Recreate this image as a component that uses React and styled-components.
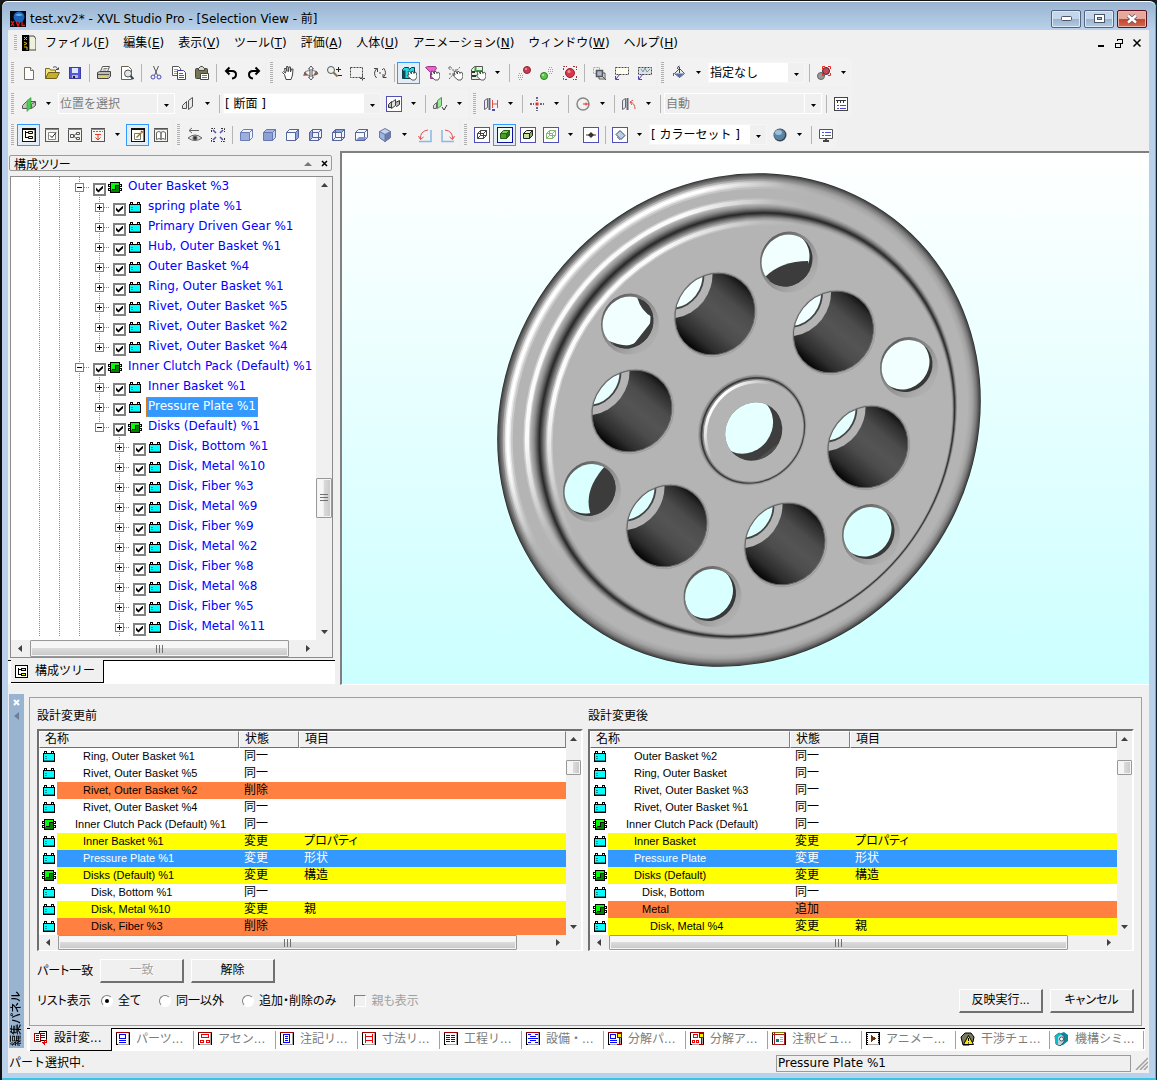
import React, { useState } from 'react';
import styled, { createGlobalStyle, css } from 'styled-components';

const GlobalStyle = createGlobalStyle`
* {
  box-sizing: border-box;
}

body {
  margin: 0;
  background: #1b1b1f;
  font: 12px/18px "DejaVu Sans", "Noto Sans CJK JP", sans-serif;
  color: #000;
}

button, input, select {
  font: inherit;
  color: inherit;
  margin: 0;
}

svg {
  display: block;
  flex: none;
}
`;

/* ---------- window frame ---------- */

const Frame = styled.div`
  display: flex;
  flex-direction: column;
  min-height: 100vh;
  padding: 0 7px 7px 6px;
  border: 1px solid #111;
  border-right-color: #0b2530;
  border-left-width: 2px;
  border-radius: 7px 7px 0 0;
  background: #b9d1ea;
  box-shadow: inset 0 1px #fff, inset -1px 0 #35c5e8, inset 0 -2px #35c5e8;
`;

const TitleBar = styled.header`
  display: flex;
  align-items: center;
  gap: 4px;
  height: 28px;
  margin: 1px -6px 0;
  padding: 5px 8px 0 8px;
  border-radius: 6px 6px 0 0;
  background: linear-gradient(#99b4d1, #b9d1ea);
`;

const Title = styled.h1`
  flex: 1;
  margin: 0;
  font-size: 12px;
  font-weight: normal;
`;

const Caption = styled.button`
  display: flex;
  align-items: center;
  justify-content: center;
  width: 30px;
  height: 18px;
  margin-left: -1px;
  padding: 0;
  border: 1px solid ${p => (p.$close ? '#5a0f1c' : '#52647f')};
  border-radius: 2px;
  background: ${p => (p.$close
    ? 'linear-gradient(#e6a79c 0 8px, #c4432b 8px, #cf6a50)'
    : 'linear-gradient(#c3d6ea 0 8px, #98b2cf 8px, #b6cbe2)')};
  box-shadow: inset 0 0 0 1px ${p => (p.$close ? '#eab5aa' : '#dce8f4')};
`;

const Client = styled.div`
  flex: 1;
  display: flex;
  flex-direction: column;
  background: #f0f0f0;
`;

/* ---------- menu and toolbars ---------- */

const MenuBar = styled.nav`
  display: flex;
  align-items: center;
  height: 27px;
  padding: 0 0 2px 3px;
`;

const MenuItem = styled.a`
  padding: 0 7px;
  color: #000;
  text-decoration: none;
`;

const DocIcon = styled.span`
  margin: 0 2px 0 2px;
`;

const MdiButtons = styled.div`
  display: flex;
  gap: 4px;
  margin-left: auto;
  margin-right: 5px;
`;

const FlatButton = styled.button`
  display: flex;
  align-items: center;
  justify-content: center;
  width: 14px;
  height: 14px;
  padding: 0;
  border: 0;
  background: none;
`;

const ToolRow = styled.div`
  display: flex;
  align-items: center;
  gap: 2px;
  height: 31px;
`;

const Bar = styled.div`
  display: flex;
  align-items: center;
  height: 29px;
  border-radius: 3px;
  background: #f2f2f2;
`;

const Grip = styled.span`
  width: 3px;
  height: ${p => p.$height || 21}px;
  margin: 0 3px;
  background: repeating-linear-gradient(#b0b0b0 0 1px, #f4f4f4 1px 2px);
`;

const Sep = styled.span`
  width: 1px;
  height: 18px;
  margin: 0 2px 0 3px;
  background: #b5b5b5;
`;

const Tool = styled.button`
  display: flex;
  align-items: center;
  justify-content: center;
  width: 23px;
  height: 22px;
  padding: 0;
  border: 1px solid transparent;
  background: none;
  ${p => p.$on && css`
    border-color: #3399ff;
    background: #e3edf7;
  `}
`;

const Drop = styled(Tool)`
  width: 17px;
`;

const ComboBox = styled.span`
  position: relative;
  width: ${p => p.$width}px;
  height: 21px;
  padding: 0 1px;
`;

const ComboSelect = styled.select`
  appearance: none;
  width: 100%;
  height: 21px;
  padding: 0 20px 0 1px;
  border: 1px solid ${p => (p.disabled ? '#fff' : '#f6f6f6')};
  border-radius: 0;
  outline: 0;
  background: ${p => (p.disabled ? '#f0f0f0' : '#fff')};
  color: ${p => (p.disabled ? '#7c7c7c' : '#000')};
  opacity: 1;
`;

const ComboArrow = styled.span`
  position: absolute;
  top: 1px;
  right: 2px;
  display: flex;
  align-items: center;
  justify-content: center;
  width: 17px;
  height: 19px;
  padding-top: 4px;
  border-left: 1px solid #fff;
  background: #f0f0f0;
  pointer-events: none;
`;

/* ---------- workspace ---------- */

const Workspace = styled.main`
  flex: 1;
  display: grid;
  grid-template-columns: 327px 1fr;
  gap: 5px;
  padding-top: 1px;
`;

const SidePane = styled.section`
  display: flex;
  flex-direction: column;
  padding: 4px 0 1px;
`;

const PaneHeader = styled.div`
  display: flex;
  align-items: flex-start;
  gap: 2px;
  height: 16px;
  margin: 0 3px 5px 1px;
  padding: 0 0 0 4px;
  border: 1px solid #9a9a9a;
  border-radius: 2px;
`;

const PaneTitle = styled.h2`
  flex: 1;
  margin: 0;
  font-size: 12px;
  font-weight: normal;
  font-feature-settings: "palt";
  line-height: 18px;
`;

const TreeFrame = styled.div`
  flex: 1;
  display: grid;
  grid-template-columns: 1fr 16px;
  grid-template-rows: 1fr 17px;
  margin: 0 2px 0 2px;
  border: 1px solid #8c8c8c;
  background: #f0f0f0;
`;

const TreeList = styled.ul`
  margin: 0;
  padding: 0 0 3px 19px;
  background: #fff;
  list-style: none;
  overflow: hidden;
`;

const TreeItem = styled.li`
  display: flex;
  align-items: center;
  height: 20px;
  white-space: nowrap;
`;

const Guide = styled.span`
  width: 20px;
  height: 20px;
  background: ${p => (p.$blank ? 'none' : 'repeating-linear-gradient(#8a8a8a 0 1px, #fff 1px 2px) 9px 0 / 1px 20px no-repeat')};
`;

const Knot = styled.span`
  display: flex;
  align-items: center;
  width: 20px;
  height: 20px;
  padding-left: 5px;
  background:
    repeating-linear-gradient(90deg, #8a8a8a 0 1px, #fff 1px 2px) 10px 10px / 10px 1px no-repeat,
    repeating-linear-gradient(#8a8a8a 0 1px, #fff 1px 2px) 9px 0 / 1px ${p => (p.$end ? 10 : 20)}px no-repeat;
`;

const KnotButton = styled(FlatButton)`
  width: 9px;
  height: 9px;
  background: #fff;
`;

const TreeCheck = styled.input`
  appearance: none;
  display: grid;
  width: 13px;
  height: 13px;
  margin: 4px ${p => (p.$tight ? 2 : 3)}px 0 3px;
  border: 2px solid #808080;
  background: #fff;

  &:checked::before {
    content: "";
    width: 7px;
    height: 7px;
    margin: 1px;
    background: #000;
    clip-path: polygon(0 30%, 35% 65%, 100% 0, 100% 38%, 35% 100%, 0 68%);
  }
`;

const TreeText = styled.label`
  height: 20px;
  margin-left: ${p => (p.$tight ? 4 : 5)}px;
  padding: 0 1px;
  border: 1px solid transparent;
  line-height: 17px;
  color: #0000ff;
  ${p => p.$selected && css`
    border: 1px dotted #e08020;
    background: #3399ff;
    color: #fff;
  `}
`;

const SideTabs = styled.div`
  display: flex;
  height: 24px;
  margin-top: 2px;
  border-top: 1px solid #000;
  background: #fff;
`;

const SideTab = styled.button`
  display: flex;
  align-items: center;
  gap: 7px;
  height: 23px;
  margin: -1px 0 0 3px;
  padding: 0 8px 0 4px;
  border: solid #000;
  border-width: 0 1px 1px 0;
  background: #f0f0f0;
`;

const View = styled.section`
  display: flex;
  border: 1px solid #fff;
  border-top: 2px solid #808080;
  border-left: 2px solid #808080;
  border-right: 0;
  background: linear-gradient(#fff, #ccffff);
`;

/* ---------- scroll bars ---------- */

const ScrollTrack = styled.div`
  display: grid;
  background: #f0f0f0;
  ${p => (p.$vertical
    ? css`grid-template-rows: 17px ${p.$before}fr ${p.$size}fr ${p.$after}fr 17px;`
    : css`grid-template-columns: 18px ${p.$before}fr ${p.$size}fr ${p.$after}fr 18px;`)}
`;

const Thumb = styled.span`
  display: flex;
  align-items: center;
  justify-content: center;
  min-width: 0;
  min-height: 0;
  border: 1px solid #989898;
  border-radius: 1px;
  background: linear-gradient(${p => (p.$vertical ? '90deg' : '180deg')}, #f6f6f6 0 45%, #dadada 50%, #c8c8c8);
  box-shadow: inset 0 0 0 1px #f4f4f4;
`;

const ScrollCell = styled.span`
  display: flex;
  align-items: center;
  justify-content: center;
`;

/* ---------- compare panel ---------- */

const Dock = styled.section`
  display: flex;
  margin-top: 9px;
  padding-left: 1px;
`;

const DockHandle = styled.div`
  display: flex;
  flex-direction: column;
  align-items: center;
  width: 15px;
  margin-bottom: 3px;
  padding: 1px 0 2px;
  background: #99b4d1;
`;

const DockTitle = styled.span`
  margin-top: auto;
  font-size: 11px;
  font-weight: 500;
  line-height: 15px;
  writing-mode: vertical-rl;
  text-orientation: sideways;
  transform: rotate(180deg);
`;

const DockBody = styled.div`
  flex: 1;
  min-width: 0;
  padding: 3px 4px 0 3px;
`;

const Group = styled.div`
  margin: 0 3px 2px 2px;
  padding: 9px 7px 12px 7px;
  border: 1px solid #a0a0a0;
  font-family: "Liberation Sans", "Noto Sans CJK JP", sans-serif;
  font-feature-settings: "palt";
  white-space: nowrap;
`;

const Lists = styled.div`
  display: grid;
  grid-template-columns: 1fr 1fr;
  gap: 5px;
`;

const ListTitle = styled.h3`
  margin: 0 0 4px;
  font-size: 12px;
  font-weight: normal;
  line-height: 18px;
`;

const ListFrame = styled.div`
  display: grid;
  grid-template-columns: 1fr 15px;
  grid-template-rows: 204px 15px;
  border: solid;
  border-width: 2px 2px 1px 2px;
  border-color: #707070 #fff #fff #707070;
  background: #f0f0f0;
`;

const ListPort = styled.div`
  overflow: hidden;
  background: #fff;
`;

const Table = styled.table`
  width: 100%;
  table-layout: fixed;
  border-collapse: separate;
  border-spacing: 0;
  line-height: 17px;
`;

const HeadCell = styled.th`
  height: 17px;
  padding: 0 0 0 5px;
  border: 1px solid;
  border-color: #fff #808080 #707070 #fff;
  background: #f0f0f0;
  font-weight: normal;
  line-height: 15px;
  text-align: left;
`;

const ROW_COLORS = {
  same: ['#fff', '#000'],
  gone: ['#ff8040', '#000'],
  added: ['#ff8040', '#000'],
  changed: ['#ffff00', '#000'],
  current: ['#3399ff', '#fff'],
};

const Cell = styled.td`
  height: 17px;
  padding: 0 0 0 5px;
  background: ${p => ROW_COLORS[p.$kind][0]};
  color: ${p => ROW_COLORS[p.$kind][1]};
`;

const IconCell = styled.td`
  height: 17px;
  padding: 0 0 0 ${p => (p.$wide ? 3 : 4)}px;
`;

const NameCell = styled(Cell)`
  padding-left: ${p => 10 + p.$level * 8}px;
  font-size: 11px;
`;

const PushButton = styled.button`
  width: 84px;
  height: 24px;
  padding: 0 0 2px;
  border: solid;
  border-width: 1px 2px 2px 1px;
  border-color: #fff #707070 #707070 #fff;
  background: #f0f0f0;

  &:disabled {
    color: #a0a0a0;
    text-shadow: 1px 1px #fff;
  }
`;

const MatchRow = styled.div`
  display: flex;
  align-items: center;
  gap: 7px;
  margin-top: 8px;
`;

const RowLabel = styled.span`
  width: ${p => p.$width}px;
`;

const FilterRow = styled.fieldset`
  display: flex;
  align-items: center;
  margin: 6px 0 0;
  padding: 0;
  border: 0;
`;

const Choice = styled.label`
  display: flex;
  align-items: center;
  gap: 5px;
  margin-right: 18px;
  color: ${p => (p.$off ? '#a0a0a0' : '#000')};
`;

const Radio = styled.input`
  appearance: none;
  display: grid;
  place-items: center;
  width: 12px;
  height: 12px;
  border: 1px solid;
  border-color: #808080 #fff #fff #808080;
  border-radius: 6px;
  background: #fff;

  &:checked::before {
    content: "";
    width: 4px;
    height: 4px;
    border-radius: 2px;
    background: #000;
  }
`;

const CheckBox = styled.input`
  appearance: none;
  width: 12px;
  height: 12px;
  border: 1px solid;
  border-color: #808080 #fff #fff #808080;
  background: #f0f0f0;
`;

const Commands = styled.div`
  display: flex;
  gap: 7px;
  margin-left: auto;
`;

const DockTabs = styled.div`
  display: flex;
  height: 23px;
  padding-left: 3px;
  border-top: 1px solid #000;
  background: #fff;
`;

const DockTab = styled.button`
  display: flex;
  align-items: center;
  gap: 6px;
  flex: ${p => (p.$wide ? '0 1 94px' : '0 1 82px')};
  height: 18px;
  min-width: 0;
  margin-top: 2px;
  padding: 0 0 2px 4px;
  border: 0;
  border-right: 1px solid #a0a0a0;
  background: none;
  color: #7c7c7c;
  white-space: nowrap;
  ${p => p.$on && css`
    height: 23px;
    margin-top: -1px;
    padding-bottom: 3px;
    border: solid #000;
    border-width: 0 1px 1px 0;
    background: #f0f0f0;
    color: #000;
  `}
`;

const StatusBar = styled.footer`
  display: flex;
  align-items: center;
  gap: 3px;
  height: 22px;
  padding: 2px 1px 0 1px;
`;

const StatusText = styled.span`
  flex: 1;
`;

const StatusField = styled.output`
  width: 355px;
  height: 17px;
  padding: 0 1px;
  border: 1px solid #9a9a9a;
  line-height: 14px;
`;

/* ---------- icons ---------- */

const Svg = ({ w = 16, h = 16, children, ...rest }) => (
  <svg width={w} height={h} viewBox={`0 0 ${w} ${h}`} fill="none" aria-hidden="true" {...rest}>{children}</svg>
);

const Caret = () => <Svg w={5} h={3}><path d="M0 0h5L2.500 3z" fill="#000" /></Svg>;

const Cube = ({ front, top, side, line = '#55659a', inner }) => (
  <g stroke={line}>
    <path d="M1.500 5.500h9v8h-9z" fill={front} />
    <path d="M1.500 5.500l3-3h9l-3 3z" fill={top} />
    <path d="M10.500 5.500l3-3v8l-3 3z" fill={side} />
    {inner && <path d="M4.500 2.500v8h9M4.500 10.500l-3 3" />}
  </g>
);

const SmallCube = ({ fill, top, side, line, wire }) => (
  <g stroke={line}>
    <path d="M3.500 6.500h6v5h-6z" fill={fill} />
    <path d="M3.500 6.500l3-3h6l-3 3z" fill={top} />
    <path d="M9.500 6.500l3-3v5l-3 3z" fill={side} />
    {wire && <path d="M6.500 3.500v5h6M6.500 8.500l-3 3" />}
  </g>
);

const BoxFrame = ({ color = '#5050b8', fill = '#fff', children }) => (
  <g>
    <rect x="0.500" y="0.500" width="15" height="15" stroke={color} fill={fill} />
    {children}
  </g>
);

const Plate = ({ children, dark }) => (
  <g>
    <rect x="1.500" y="1.500" width="13" height="13" fill={dark ? '#fffdf0' : '#f4f4f0'} stroke={dark ? '#111' : '#555'} />
    <path d="M1 2.500h14" stroke={dark ? '#111' : '#888'} />
    {dark && <path d="M14 2v13" stroke="#111" />}
    {children}
  </g>
);

const Pointer = () => (
  <path d="M7 6.500l1.500-.5 2 3V6.500h1.500l1 2 1-1.500 1.500 1 .5 4-2 3h-3L7 11.500l-.5-1.500 1.500 0z" fill="#fff" stroke="#333" strokeWidth=".8" />
);

const Slab = ({ x = 0, fill = '#e4ecf0' }) => (
  <path d={`M${x + 2.5} 4.500l3-2v9l-3 2z`} fill={fill} stroke="#667" />
);

const ICONS = {
  newFile: <g><path d="M3.500 2.500h6l3 3v9h-9z" fill="#fff" stroke="#77705c" /><path d="M9.500 2.500v3h3" stroke="#77705c" fill="#eee" /></g>,
  open: <g><path d="M1.500 13.500v-10h4l1 1.500h5v3" fill="#f4e27a" stroke="#7a6a20" /><path d="M1.500 13.500l3-6h11l-3 6z" fill="#c8ac2c" stroke="#6f6018" /><path d="M9 2.500c2-1.500 4-.5 4.500 1.500M14.500 2.500v2h-2.500" stroke="#444" /></g>,
  save: <g><rect x="2.500" y="2.500" width="11" height="11" fill="#5656d8" stroke="#3c3ca4" /><rect x="5" y="3" width="6" height="5" fill="#dfe6ff" /><rect x="5" y="10" width="6" height="3" fill="#b8b8c8" /><rect x="6" y="11" width="2" height="2" fill="#222" /></g>,
  print: <g><path d="M4.500 6.500l2-5h7l-2 5" fill="#fff" stroke="#555" /><path d="M7.500 3.500h4M6.500 5h4" stroke="#888" /><path d="M1.500 7.500l2-1h11v5l-2 2h-11z" fill="#bcbcb4" stroke="#444" /><path d="M2 9.500h11" stroke="#555" /><path d="M3 12h8" stroke="#f2d848" strokeWidth="1.500" /></g>,
  preview: <g><path d="M2.500 1.500h7l3 3v10h-10z" fill="#fff" stroke="#66604c" /><circle cx="9" cy="8.500" r="3.500" fill="#dbe8ec" stroke="#555" /><path d="M11.500 11l3 3" stroke="#444" strokeWidth="2" /></g>,
  cut: <g stroke="#555"><path d="M5.500 1l4 9.500M10.500 1l-4 9.500" /><circle cx="5" cy="12" r="2" stroke="#4848c8" /><circle cx="11" cy="12" r="2" stroke="#4848c8" /></g>,
  copy: <g><path d="M1.500 1.500h6l2 2v7h-8z" fill="#fff" stroke="#555" /><path d="M3 4.500h4M3 6.500h4M3 8.500h3" stroke="#999" /><path d="M6.500 5.500h6l2 2v7h-8z" fill="#fff" stroke="#40409c" /><path d="M8 8.500h4M8 10.500h5M8 12.500h5" stroke="#5555c4" /></g>,
  paste: <g><rect x="1.500" y="3.500" width="12" height="10" rx="1" fill="#77764e" stroke="#444" /><path d="M4.500 5.500v-2l2-2h2l2 2v2z" fill="#d8d8d0" stroke="#444" /><path d="M6.500 8.500h8v6h-8z" fill="#fff" stroke="#444" /><path d="M8 10.500h5M8 12.500h5" stroke="#777" /></g>,
  undo: <path d="M3 6h6q4 0 4 3.500t-4 4M6.500 2.500L3 6l3.500 3.500" stroke="#000" strokeWidth="2" />,
  redo: <path d="M13 6H7q-4 0-4 3.500t4 4M9.500 2.500L13 6 9.500 9.500" stroke="#000" strokeWidth="2" />,
  hand: <path d="M4.500 9.500l-2-2 1-1 2 1.500-1-4.500h1.500l1 3-.5-5h1.500l.5 5 .5-4.500h1.500V7l1-3h1.500l-.5 6-1.500 4.500h-5z" fill="#fff" stroke="#444" />,
  orbit: <g stroke="#555"><ellipse cx="8" cy="8" rx="6.500" ry="2.500" stroke="#777" /><path d="M8 1l2.500 3H9v8h1.500L8 15l-2.500-3H7V4H5.500z" fill="#fff" /><path d="M2 7l-1.500 3.500 4-.5zM13 6l2 3-4 1z" fill="#a05048" strokeWidth=".5" /></g>,
  zoom: <g stroke="#555"><circle cx="5" cy="5" r="3.500" fill="#e8f0f0" /><path d="M7.500 7.500l4 4" stroke="#85744a" strokeWidth="2" /><path d="M10 4.500h5M12.500 2v5M12 10.500h4" stroke="#222" /></g>,
  marquee: <path d="M1.500 2.500h12v10h-12zM13.500 10.500v5M11 13.500h5" stroke="#444" strokeDasharray="2 1" />,
  spin: <g stroke="#444"><path d="M4.500 13q-4-5 0-9M2 3.500h3.500V7M11.500 3q4 5 0 9M14.500 12.500H11V9" /><path d="M7 8h2M10 5l1-1" /></g>,
  pickPart: <g><path d="M1.500 4.500l2-2h4l1 2 2-2h3v8l-4 3h-8z" fill="#20d8e0" stroke="#083c40" /><path d="M1.500 5.500v8h3v-8z" fill="#184858" /><Pointer /></g>,
  pickFace: <g><path d="M1.500 2.500l2-1h8l1 2-3 4v6h-3v-6z" fill="#ec60d0" stroke="#993a88" /><Pointer /></g>,
  pickEdge: <g stroke="#666"><path d="M2 14L13 2M1 3h4M3 1v4M2 9h5M5 5h5" strokeDasharray="2 1" /><Pointer /></g>,
  pickAny: <g><path d="M1.500 4.500l3-3h8v10l-3 3h-8z" fill="#e8f0e4" stroke="#555" /><path d="M5.500 2v4h7" stroke="#39a339" strokeWidth="2" /><path d="M2 7h3M2 11h4" stroke="#333" strokeWidth="2" /><Pointer /></g>,
  moveRed: <g><circle cx="11" cy="5" r="3.500" fill="#c83c50" stroke="#8c2434" /><circle cx="10" cy="4" r="1" fill="#f0a0a8" /><g stroke="#c09c60" strokeDasharray="1 1"><path d="M3 8.500h4M2 10.500h6M2 12.500h6M3 14.500h4" /></g></g>,
  moveGreen: <g><circle cx="5" cy="11" r="3.500" fill="#5cc848" stroke="#307828" /><circle cx="4" cy="10" r="1" fill="#c0f0b0" /><g stroke="#c09c60" strokeDasharray="1 1"><path d="M10 2.500h4M9 4.500h6M9 6.500h6M10 8.500h4" /></g></g>,
  focusRed: <g><circle cx="8" cy="8" r="4.500" fill="#d8384c" stroke="#98202e" /><circle cx="7" cy="6.500" r="1.500" fill="#f09098" /><path d="M1.500 5v-3.500H5M11 1.500h3.500V5M14.500 11v3.500H11M5 14.500H1.500V11" stroke="#a03038" strokeDasharray="2 1" /></g>,
  layers: <g stroke="#555"><path d="M2.500 2.500h6v6h-6z" stroke="#8ab894" strokeDasharray="2 1" /><path d="M5.500 5.500h6v6h-6z" fill="#a8b8d0" strokeWidth="1.500" /><path d="M12 8h2v6H8v-2M15 15l-3-3" /></g>,
  lassoA: <g><path d="M1.500 2.500h13v7h-13z" stroke="#444" fill="#fffdf0" strokeDasharray="2 1" /><path d="M6 9l-4 5M1.500 11v3.500H5" stroke="#5040b0" /></g>,
  lassoB: <g><path d="M1.500 2.500h13v7h-13z" stroke="#444" fill="#dfe3e8" strokeDasharray="2 1" /><path d="M4 4l2 3 2-4 2 4 3-3" stroke="#799" /><path d="M6 9l-4 5M1.500 11v3.500H5" stroke="#5040b0" /></g>,
  bucket: <g><path d="M3.500 8.500l5-5 5 5-5 4z" fill="#e8eef4" stroke="#555" /><path d="M4 8.500h9l-4.500 4z" fill="#5c6fa8" /><path d="M8.500 2v6M6.500 4q0-3 2-3" stroke="#444" /><path d="M2.500 8v3" stroke="#5060a8" /></g>,
  linkRed: <g><circle cx="5" cy="11" r="3.500" fill="#999" stroke="#666" /><circle cx="10" cy="6" r="3.500" fill="#c84858" stroke="#333" /><path d="M6.500 4V1.500H9M12 1.500h2.500V4M14.500 8v2.500H12M6.500 8v2.500H9" stroke="#f02828" /></g>,

  sectionCut: <g><path d="M1.500 9.500l4-4h9v4l-4 3h-9z" fill="#c4c4bc" stroke="#555" /><path d="M10.500 12v-4l4-2" stroke="#666" /><path d="M6 4.500l4-3v10l-4 4z" fill="#4ccc50" stroke="#289a30" strokeWidth=".6" /></g>,
  sectionA: <g stroke="#555"><path d="M2.500 12.500v-3l4-4v7z" fill="#e8e8e4" /><path d="M8.500 13.500v-9l4-3v9z" fill="#ece9e4" /></g>,
  sectionBox: <BoxFrame><path d="M2.500 11.500v-3l3-3v6zM9.500 9.500v-3l4-2v4l-3 2z" fill="#bbb" stroke="#333" /><path d="M5.500 12.500v-6l4-3v6z" fill="#e4e4e4" stroke="#444" /></BoxFrame>,
  sectionOk: <g><path d="M1.500 12.500v-3l3-3v6z" fill="#ddd" stroke="#666" /><path d="M5.500 12.500v-8l4-3v8z" fill="#a0e8a0" stroke="#38a040" /><path d="M10 11l2 3 3-5" stroke="#333" /></g>,
  distance: <g><Slab x={-1} /><path d="M6.500 2v12" stroke="#667" strokeWidth="2" /><path d="M9.500 4v8M14.500 4v8M9.500 8h5" stroke="#e05048" /><path d="M9 13h3v2H9z" fill="#5050a0" /></g>,
  point: <g><path d="M8 1v4M8 11v4M1 8h4M11 8h4" stroke="#668" strokeWidth="2" strokeDasharray="2 1" /><path d="M6.500 6.500h3v3h-3z" fill="#e03020" /></g>,
  radius: <g><circle cx="8" cy="8" r="6" stroke="#888" strokeWidth="1.500" /><path d="M8 8h6M11 6.500v3" stroke="#f02820" /></g>,
  angle: <g><Slab x={-1} /><path d="M6.500 2v12" stroke="#667" strokeWidth="2" /><path d="M9 6q5 1 5 7M9 6l3-2M9 6l2 3" stroke="#e05048" /></g>,
  ruler: <g><rect x="1.500" y="1.500" width="13" height="13" fill="#fff" stroke="#444" /><path d="M3 4.500h10M4.500 4v3M7.500 4v3M10.500 4v3" stroke="#333" /><path d="M4 9.500h2M7 9.500h6M4 12.500h2M7 12.500h6" stroke="#4a4ac8" /></g>,

  treePanel: <Plate dark><path d="M4.500 4v7M4 5.500h3M4 10.500h3" stroke="#000" /><path d="M7.500 4.500h4v2h-4zM7.500 9.500h4v2h-4z" fill="#fff29a" stroke="#000" /></Plate>,
  checkPanel: <Plate><path d="M4.500 5.500h7v7h-7z" stroke="#888" fill="#fff" /><path d="M6 8.500l2 2 4-5" stroke="#222" /></Plate>,
  linkPanel: <Plate><path d="M3.500 7.500h3v3h-3zM9.500 5.500h3v2h-3zM9.500 10.500h3v2h-3zM7 9l2-2.500M7 9l2 2.500" stroke="#555" /></Plate>,
  importPanel: <Plate><path d="M3 4.500h10" stroke="#777" strokeDasharray="2 1" /><path d="M8 7v6M5.500 10.500L8 13l2.500-2.500M5 7.500h6" stroke="#e03828" /></Plate>,
  editPanel: <Plate dark><path d="M4.500 6.500h6v6h-6z" fill="#fff" stroke="#777" /><path d="M6.500 10.500l5-5" stroke="#8a8418" strokeWidth="1.500" /><path d="M11 4l2 1.500" stroke="#c03030" strokeWidth="1.500" /></Plate>,
  bookPanel: <Plate><path d="M3.500 5.500l2.500-1 2 1v7l-2-1-2.500 1zM12.500 5.500l-2.500-1-2 1v7l2-1 2.500 1z" fill="#fff" stroke="#666" /></Plate>,
  lookBack: <g stroke="#666"><path d="M2 3.500h10M5 1L2 3.500 5 6" /><path d="M1 11q7-6 14 0-7 5-14 0z" fill="#ddd" /><circle cx="8" cy="11" r="2" fill="#333" /></g>,
  fit: <g stroke="#5050a8"><path d="M1.500 5V1.500H5M11 1.500h3.500V5M14.500 11v3.500H11M5 14.500H1.500V11" strokeDasharray="2 1" stroke="#333" /><path d="M3 3l3 3M13 3l-3 3M13 13l-3-3M3 13l3-3" strokeWidth="1.500" /></g>,
  viewFront: <Cube front="#9aaee0" top="#eef2fb" side="#eef2fb" line="#6c7cb4" />,
  viewBack: <Cube front="#8fa0d4" top="#a8b8e6" side="#c8d2f0" line="#6678b0" />,
  viewLeft: <Cube front="#f6f8ff" top="#f6f8ff" side="#8fa4dc" />,
  viewRight: <g><Cube front="#f0f3fc" top="#f0f3fc" side="#f0f3fc" inner /><path d="M2 6l2-2v6l-2 3z" fill="#8fa4dc" /></g>,
  viewTop: <Cube front="#f2f5fd" top="#8fa4dc" side="#f2f5fd" inner />,
  viewBottom: <g><Cube front="#f6f8ff" top="#f6f8ff" side="#f6f8ff" /><path d="M2 13l3-3h8l-3 3z" fill="#7f94d0" /></g>,
  viewIso: <g stroke="#667aa8"><path d="M8 1.500l5.500 3v6L8 14.500l-5.500-4v-6z" fill="#c8d4ee" /><path d="M8 7.500l5.500-3v6L8 14.500z" fill="#6c7ca8" /><path d="M2.500 4.500l5.500 3v7l-5.500-4z" fill="#a0b4e0" /></g>,
  rotateLeft: <g><path d="M2 14.500h12V3" stroke="#88b8e8" strokeWidth="1.500" /><path d="M3.500 12Q3 4 11 3M1.500 9l2 3.500 3-2.500" stroke="#e05050" /></g>,
  rotateRight: <g><path d="M14 14.500H2V3" stroke="#88b8e8" strokeWidth="1.500" /><path d="M12.500 12Q13 4 5 3M14.500 9l-2 3.500-3-2.500" stroke="#e05050" /></g>,
  drawWire: <BoxFrame><SmallCube fill="none" top="none" side="none" line="#444" wire /></BoxFrame>,
  drawSolid: <BoxFrame color="#1010a0" fill="#f2fff0"><SmallCube fill="#4c9c30" top="#80c860" side="#2f7018" line="#286018" /></BoxFrame>,
  drawEdges: <BoxFrame><SmallCube fill="#c0e0a8" top="#e0f4d0" side="#80a868" line="#222" /></BoxFrame>,
  drawGhost: <BoxFrame><SmallCube fill="#fff" top="#f4fff0" side="#fff" line="#88b878" wire /></BoxFrame>,
  midPoint: <BoxFrame><path d="M3 8h10" stroke="#333" /><path d="M8 5l3 3-3 3-3-3z" fill="#333" /></BoxFrame>,
  tilt: <BoxFrame><path d="M4 7.500l4-4 5 5-4 4z" fill="#b8d0e8" stroke="#445" /><path d="M5 10l3 3" stroke="#889" /></BoxFrame>,
  ball: <g><circle cx="8" cy="8" r="6.500" fill="#3c4450" /><circle cx="7.500" cy="7.500" r="5.500" fill="#5c84a4" /><ellipse cx="6.500" cy="5.500" rx="3.500" ry="2.500" fill="#9cc0d8" /></g>,
  monitor: <g><path d="M1.500 2.500h13v9h-13z" fill="#fff" stroke="#555" /><path d="M4 5.500h2M7 5.500h6M4 8.500h2M7 8.500h6" stroke="#4858c8" /><path d="M5 14h6M8 12v2" stroke="#444" strokeWidth="2" /></g>,
};

const Icon = ({ name }) => <Svg>{ICONS[name]}</Svg>;

const PartIcon = () => (
  <Svg w={12} h={11} shapeRendering="crispEdges">
    <path d="M1 0h3v2h4V0h3v2h1v9H0V2h1z" fill="#000" />
    <path d="M2 1h1v1H2zM9 1h1v1H9z" fill="#fff" />
    <path d="M1 3h10v7H1z" fill="#00ffff" />
    <path d="M2 5h2v1H2zM2 7h2v1H2zM1 9h10v1H1z" fill="#008c8c" />
  </Svg>
);

const AssemblyIcon = () => (
  <Svg w={14} h={11} shapeRendering="crispEdges">
    <path d="M2 0h10v11H2zM0 2h2v3H0zM0 6h2v3H0zM12 2h2v3h-2zM12 6h2v3h-2z" fill="#000" />
    <path d="M1 3h1v1H1zM1 7h1v1H1zM12 3h1v1h-1zM12 7h1v1h-1z" fill="#fff" />
    <path d="M3 1h8v9H3z" fill="#00ff00" />
    <path d="M8 4h3v6H3V8h5z" fill="#008000" />
    <path d="M7 3h4v1H8v4H4V7h3z" fill="#000" />
  </Svg>
);

const TabBase = ({ children, top = '#a00000' }) => (
  <Svg w={14} h={14} shapeRendering="crispEdges">
    <path d="M0.500 0.500h13v12H.5z" fill="#fff" stroke="#000" />
    <path d="M12 1v11H2" stroke="#a8a8a8" />
    <path d="M0 0.500h14" stroke={top} />
    {children}
  </Svg>
);

const Pin = () => <g><path d="M11.500 4v9M9 12.500h5" stroke="#900" /><path d="M9 1h4v4H9z" fill="#ffee00" stroke="#900" /></g>;

const TAB_ICONS = {
  change: <Svg w={14} h={14} shapeRendering="crispEdges"><path d="M5.500.5h7v9h-7z" fill="#fff" stroke="#000" /><path d="M7 2.500h4M7 4.500h4M7 6.500h4" stroke="#00f" /><path d="M.5 2.500h6v8h-6z" fill="#fff" stroke="#a00000" /><path d="M2 4.500h3M2 6.500h3M2 8.500h3" stroke="#00f" /><path d="M12.500 8v3.500H8M10.500 9v5M9 10.500v2" stroke="#e00000" /></Svg>,
  parts: <TabBase><path d="M3.500 2.500h6v4h-6zM3 8.500h7M3 10.500h7" stroke="#00f" /></TabBase>,
  assembly: <TabBase><path d="M3.500 2.500h7v3h-7zM2.500 8.500h3v2h-3zM8.500 8.500h3v2h-3z" stroke="#e00" /></TabBase>,
  note: <TabBase><path d="M3.500 2.500h6v8h-6z M5 4.500h3M5 6.500h3M5 8.500h3" stroke="#00f" /></TabBase>,
  dimension: <TabBase><path d="M3.500 2v9M10.500 2v9M3 4.500h8M3 8.500h8" stroke="#e00" /></TabBase>,
  process: <TabBase><path d="M2 3.500h4M2 5.500h4M2 7.500h4M2 9.500h4M7 3.500h4M7 5.500h4M7 7.500h4M7 9.500h4" stroke="#00f" /></TabBase>,
  facility: <TabBase><path d="M2 2.500h3M9 2.500h3M4 4.500h6M2 6.500h10M4 8.500h6M2 10.500h3M9 10.500h3" stroke="#00f" /></TabBase>,
  explodeParts: <TabBase><path d="M2.500 2.500h5v4h-5zM2 8.500h7M2 10.500h7" stroke="#00f" /><Pin /></TabBase>,
  explodeAsm: <TabBase><path d="M3.500 2.500h4v3h-4zM2.500 8.500h2v2h-2zM6.500 8.500h2v2h-2z" stroke="#e00" /><Pin /></TabBase>,
  noteView: <TabBase top="#808000"><path d="M2 0v13M12 0v13M0 2h13M0 12h13" stroke="#a02020" /><path d="M4 7h3v3H4z" fill="#008080" /><path d="M8 5h3M8 7h3M8 9h3" stroke="#aaa" /></TabBase>,
  animation: <TabBase top="#000"><path d="M1.500 2v10M12.500 2v10" stroke="#000" strokeDasharray="1 1" /><path d="M5 3l5 3.500L5 10z" fill="#703000" /></TabBase>,
  clash: <Svg w={15} h={14}><path d="M1 5l4-4h6l3 4-1 5-4 3H3z" fill="#787a60" stroke="#000" /><path d="M8.500 3.500l5 9h-10z" fill="#ffee00" stroke="#000" /><path d="M8.500 6v3M8.500 10.500v1" stroke="#000" /></Svg>,
  mechanism: <Svg w={15} h={14}><path d="M5 2l5-2 4 3v6l-5 4-4 1z" fill="#088a9a" /><path d="M1 4l4-3 5 3v6l-4 4-4-2z" fill="#c0d4d8" stroke="#456" /><path d="M1 4l4-3 3 1-4 3v8l-3-2z" fill="#00c0d0" /><circle cx="7.500" cy="7" r="2" fill="#fff" stroke="#456" /></Svg>,
};

const SideTabIcon = () => (
  <Svg w={13} h={13} shapeRendering="crispEdges">
    <path d="M.5.5h12v12H.5z" fill="#fff" stroke="#000" />
    <path d="M3.500 3v7M4 4.500h2M4 9.500h2" stroke="#000" />
    <path d="M6.500 3.500h4v2h-4zM6.500 8.500h4v2h-4z" fill="#ff0" stroke="#000" />
  </Svg>
);

/* ---------- toolbar contents: '-' separator, 'v' drop arrow, '*' pressed ---------- */

const TOOL_ROWS = [
  [
    ['newFile', 'open', 'save', '-', 'print', 'preview', '-', 'cut', 'copy', 'paste', '-', 'undo', 'redo'],
    ['hand', 'orbit', 'zoom', 'marquee', 'spin', '-', '*pickPart', 'pickFace', 'pickEdge', 'pickAny', 'v', '-', 'moveRed', 'moveGreen', 'focusRed', '-', 'layers', 'lassoA', 'lassoB'],
    ['bucket', 'v', { label: '指定なし', width: 99 }, '-', 'linkRed', 'v'],
  ],
  [
    ['sectionCut', 'v', { label: '位置を選択', width: 119, disabled: true }, 'sectionA', 'v', '-', { label: '[ 断面 ]', width: 160 }, 'sectionBox', 'v', '-', 'sectionOk', 'v'],
    ['distance', 'v', '-', 'point', 'v', '-', 'radius', 'v', '-', 'angle', 'v', '-', { label: '自動', width: 160, disabled: true }, '-', 'ruler'],
  ],
  [
    ['*treePanel', 'checkPanel', 'linkPanel', 'importPanel', 'v', '*editPanel', 'bookPanel'],
    ['lookBack', 'fit', '-', 'viewFront', 'viewBack', 'viewLeft', 'viewRight', 'viewTop', 'viewBottom', 'viewIso', 'v', 'rotateLeft', 'rotateRight'],
    ['drawWire', '*drawSolid', 'drawEdges', 'drawGhost', 'v', 'midPoint', '-', 'tilt', 'v', { label: '[ カラーセット ]', width: 120 }, 'ball', 'v', '-', 'monitor'],
  ],
];

const MENU = [['ファイル', 'F'], ['編集', 'E'], ['表示', 'V'], ['ツール', 'T'], ['評価', 'A'], ['人体', 'U'], ['アニメーション', 'N'], ['ウィンドウ', 'W'], ['ヘルプ', 'H']];

function ToolItem({ item }) {
  if (item === '-') return <Sep />;
  if (item === 'v') return <Drop aria-label="その他"><Caret /></Drop>;
  if (item.label) {
    return (
      <ComboBox $width={item.width}>
        <ComboSelect aria-label={item.label} disabled={item.disabled}><option>{item.label}</option></ComboSelect>
        <ComboArrow><Caret /></ComboArrow>
      </ComboBox>
    );
  }
  const on = item[0] === '*';
  const name = on ? item.slice(1) : item;
  return <Tool $on={on} aria-label={name}><Icon name={name} /></Tool>;
}

/* ---------- tree ---------- */

const TREE = [
  [0, 'Outer Basket %3', 'asm'],
  [1, 'spring plate %1'],
  [1, 'Primary Driven Gear %1'],
  [1, 'Hub, Outer Basket %1'],
  [1, 'Outer Basket %4'],
  [1, 'Ring, Outer Basket %1'],
  [1, 'Rivet, Outer Basket %5'],
  [1, 'Rivet, Outer Basket %2'],
  [1, 'Rivet, Outer Basket %4', 'part', true],
  [0, 'Inner Clutch Pack (Default) %1', 'asm'],
  [1, 'Inner Basket %1'],
  [1, 'Pressure Plate %1'],
  [1, 'Disks (Default) %1', 'asm', true],
  [2, 'Disk, Bottom %1'],
  [2, 'Disk, Metal %10'],
  [2, 'Disk, Fiber %3'],
  [2, 'Disk, Metal %9'],
  [2, 'Disk, Fiber %9'],
  [2, 'Disk, Metal %2'],
  [2, 'Disk, Fiber %8'],
  [2, 'Disk, Metal %8'],
  [2, 'Disk, Fiber %5'],
  [2, 'Disk, Metal %11'],
];

function TreeRow({ id, level, name, type, end, selected }) {
  const asm = type === 'asm';
  return (
    <TreeItem>
      <Guide />
      <Guide />
      {level > 0 && <Guide />}
      {level > 1 && <Guide $blank />}
      <Knot $end={end}>
        <KnotButton aria-label={asm ? '閉じる' : '開く'}>
          <Svg w={9} h={9} shapeRendering="crispEdges">
            <path d="M.5.5h8v8h-8z" fill="#fff" stroke="#808080" />
            <path d={asm ? 'M2 4.500h5' : 'M2 4.500h5M4.500 2v5'} stroke="#000" />
          </Svg>
        </KnotButton>
      </Knot>
      <TreeCheck id={id} type="checkbox" $tight={asm} defaultChecked />
      {asm ? <AssemblyIcon /> : <PartIcon />}
      <TreeText htmlFor={id} $tight={asm} $selected={selected}>{name}</TreeText>
    </TreeItem>
  );
}

/* ---------- scroll bar ---------- */

const Arrow = ({ dir }) => {
  const shapes = { up: 'M0 5l3.500-4L7 5z', down: 'M0 2l3.500 4L7 2z', left: 'M5 0L1 3.500 5 7z', right: 'M2 0l4 3.500L2 7z' };
  return <Svg w={7} h={7}><path d={shapes[dir]} fill="#404040" /></Svg>;
};

function ScrollBar({ vertical, before, size, after, grip = true }) {
  return (
    <ScrollTrack $vertical={vertical} $before={before} $size={size} $after={after}>
      <ScrollCell><Arrow dir={vertical ? 'up' : 'left'} /></ScrollCell>
      <span />
      <Thumb $vertical={vertical}>
        {grip && (
          <Svg w={8} h={8} shapeRendering="crispEdges">
            <path d={vertical ? 'M0 .5h8M0 3.500h8M0 6.500h8' : 'M.5 0v8M3.500 0v8M6.500 0v8'} stroke="#707070" />
          </Svg>
        )}
      </Thumb>
      <span />
      <ScrollCell><Arrow dir={vertical ? 'down' : 'right'} /></ScrollCell>
    </ScrollTrack>
  );
}

/* ---------- wheel model ---------- */

// every circle of the part is seen from the same side, so all share one tilt and ratio
const Disc = ({ x, y, r, ...rest }) => (
  <ellipse rx={r} ry={r * 0.922} transform={`translate(${x} ${y}) rotate(-52.3)`} {...rest} />
);

const shade = v => `rgb(${Math.round(v)},${Math.round(v)},${Math.round(v)})`;

const grooveShade = (t) => {
  const stops = [[0, 180], [0.2, 140], [0.36, 90], [0.5, 40], [0.62, 80], [0.8, 150], [1, 180]];
  const i = Math.max(1, stops.findIndex(s => s[0] >= t));
  const [t0, a] = stops[i - 1];
  const [t1, b] = stops[i];
  return shade(a + ((b - a) * (t - t0)) / (t1 - t0));
};

const GROOVE = Array.from({ length: 29 }, (_, i) => i / 28);

const BIG_HOLES = [[715, 314], [833.5, 332], [632, 411], [868, 447], [667, 526], [785, 544]];

// edge: dark piece of the far side that shows inside the bore
const SMALL_HOLES = [
  { x: 787, y: 260.500, edge: 'M765 277q16-16 43-16l8 30h-54z' },
  { x: 628, y: 322.500, edge: 'M637 297q4 14 15 20l6-10-14-16zM652 321l-19 24 12 4 12-20zM607 340q14 7 26 5l-6 8z' },
  { x: 907, y: 366 },
  { x: 590, y: 490, edge: 'M606 465q-24 26-15 50l22-2 10-30z' },
  { x: 869, y: 533 },
  { x: 710.500, y: 595 },
];

function Wheel() {
  return (
    <svg width="100%" height="100%" viewBox="342 153 807 531" role="img" aria-label="Pressure Plate">
      <defs>
        <linearGradient id="sky" gradientUnits="userSpaceOnUse" x1="0" y1="153" x2="0" y2="684">
          <stop offset="0" stopColor="#fff" />
          <stop offset="1" stopColor="#ccffff" />
        </linearGradient>
        <radialGradient id="rim">
          <stop offset=".945" stopColor="#b4b4b4" />
          <stop offset=".965" stopColor="#a4a4a4" />
          <stop offset=".982" stopColor="#7c7c7c" />
          <stop offset=".996" stopColor="#444" />
          <stop offset="1" stopColor="#1c1c1c" />
        </radialGradient>
        <linearGradient id="fade" gradientUnits="userSpaceOnUse" x1="555" y1="285" x2="690" y2="380">
          <stop offset=".4" stopColor="#fff" />
          <stop offset=".8" stopColor="#222" />
          <stop offset="1" stopColor="#000" />
        </linearGradient>
        <mask id="lit" maskUnits="userSpaceOnUse" x="342" y="153" width="807" height="531">
          <rect x="342" y="153" width="807" height="531" fill="url(#fade)" />
        </mask>
        <linearGradient id="hubFade" gradientUnits="userSpaceOnUse" x1="712" y1="396" x2="742" y2="420">
          <stop offset=".2" stopColor="#fff" />
          <stop offset="1" stopColor="#000" />
        </linearGradient>
        <mask id="hubLit" maskUnits="userSpaceOnUse" x="690" y="370" width="130" height="130">
          <rect x="690" y="370" width="130" height="130" fill="url(#hubFade)" />
        </mask>
        <linearGradient id="bore" gradientUnits="userSpaceOnUse" x1="-33" y1="26" x2="22" y2="-40">
          <stop offset="0" stopColor="#050505" />
          <stop offset=".14" stopColor="#2c2c2c" />
          <stop offset=".36" stopColor="#4c4c4c" />
          <stop offset=".52" stopColor="#545454" />
          <stop offset=".7" stopColor="#4c4c4c" />
          <stop offset=".88" stopColor="#2c2c2c" />
          <stop offset="1" stopColor="#050505" />
        </linearGradient>
        <linearGradient id="chamfer" gradientUnits="userSpaceOnUse" x1="-20" y1="-20" x2="20" y2="20">
          <stop offset="0" stopColor="#5e5e5e" />
          <stop offset=".5" stopColor="#8c8c8c" />
          <stop offset="1" stopColor="#aeaeae" />
        </linearGradient>
        <clipPath id="bigClip"><Disc x={0} y={0} r={42} /></clipPath>
        <clipPath id="smallClip"><Disc x={0} y={0} r={26.800} /></clipPath>
        <clipPath id="hubClip"><Disc x={753.700} y={431.500} r={30} /></clipPath>
        <clipPath id="holesBack">
          {BIG_HOLES.map(([x, y]) => <Disc key={x} x={x - 42} y={y - 36} r={31} />)}
        </clipPath>
      </defs>

      <Disc x={739} y={420} r={254} fill="url(#rim)" />
      <g mask="url(#lit)" stroke="#fff" fill="none">
        <Disc x={740} y={421} r={244} strokeWidth={10} strokeOpacity=".3" />
        <Disc x={740} y={421} r={244} strokeWidth={6} strokeOpacity=".6" />
        <Disc x={740} y={421} r={244} strokeWidth={3} />
        <Disc x={743} y={422} r={227} strokeWidth={7} strokeOpacity=".4" />
        <Disc x={743} y={422} r={227} strokeWidth={4} strokeOpacity=".9" />
      </g>
      {GROOVE.map(t => (
        <Disc key={t} x={743.7 + 6.3 * t} y={422 + 5.3 * t} r={224.5 - 12.5 * t} fill={grooveShade(t)} />
      ))}
      <g mask="url(#lit)" stroke="#fff" fill="none">
        <Disc x={750} y={427.300} r={211} strokeWidth={7} strokeOpacity=".4" />
        <Disc x={750} y={427.300} r={211} strokeWidth={4} strokeOpacity=".9" />
      </g>

      <Disc x={752.300} y={430} r={57} fill="#a2a2a2" />
      <Disc x={752.300} y={430} r={56} fill="#888" />
      <Disc x={752.800} y={430.400} r={55} fill="#3c3c3c" />
      <Disc x={753.200} y={430.700} r={53.500} fill="#8a8a8a" />
      <Disc x={753.500} y={430.900} r={52.200} fill="#b4b4b4" />
      <g mask="url(#hubLit)"><Disc x={753.500} y={430.900} r={50.500} fill="none" stroke="#fff" strokeWidth={3} /></g>

      <g clipPath="url(#hubClip)">
        <rect x="720" y="398" width="66" height="66" fill="#3e3e3e" />
        <path d="M782 440l-16 22-12 0 18-14z" fill="#5a5a5a" opacity=".6" />
        <Disc x={744.500} y={424.500} r={30} fill="#e6ffff" />
      </g>

      {BIG_HOLES.map(([x, y]) => (
        <g key={x} transform={`translate(${x} ${y})`}>
          <Disc x={0.500} y={0.500} r={43.200} fill="none" stroke="#a0a0a0" strokeWidth={1.500} />
          <g clipPath="url(#bigClip)">
            <rect x="-44" y="-44" width="88" height="88" fill="url(#bore)" />
            <Disc x={-42} y={-36} r={41.500} fill="#b4b4b4" />
            <Disc x={-42} y={-36} r={33} fill="#444" />
            <g transform={`translate(${-x} ${-y})`}>
              <g clipPath="url(#holesBack)">
                <rect x={x - 60} y={y - 60} width="90" height="90" fill="url(#sky)" />
              </g>
            </g>
          </g>
          <Disc x={0} y={0} r={42} fill="none" stroke="#666" strokeWidth={1} />
        </g>
      ))}

      {SMALL_HOLES.map(({ x, y, edge }) => (
        <g key={x} transform={`translate(${x} ${y})`}>
          <Disc x={1.800} y={1.800} r={31.200} fill="url(#chamferFlat)" />
          <path
            d="M-27 2A29.700 30.700 0 0 1 3-29A29.700 30.700 0 0 1 31 0A29.700 30.700 0 0 1 1 32A28 29 0 0 1-27 2z"
            fill="url(#chamfer)"
          />
          <g clipPath="url(#smallClip)">
            <rect x="-30" y="-30" width="60" height="60" fill="#383838" />
            <Disc x={-3} y={-2.500} r={26.800} fill={y > 450 ? '#daffff' : '#f2ffff'} />
            {edge && <path d={edge} transform={`translate(${-x} ${-y})`} fill="#3c3c3c" />}
          </g>
        </g>
      ))}
    </svg>
  );
}

/* ---------- compare lists ---------- */

const STATE_TEXT = { same: '同一', gone: '削除', added: '追加', changed: '変更', current: '変更' };

const BEFORE = [
  [2, 'Ring, Outer Basket %1', 'same'],
  [2, 'Rivet, Outer Basket %5', 'same'],
  [2, 'Rivet, Outer Basket %2', 'gone'],
  [2, 'Rivet, Outer Basket %4', 'same'],
  [1, 'Inner Clutch Pack (Default) %1', 'same', '', true],
  [2, 'Inner Basket %1', 'changed', 'プロパティ'],
  [2, 'Pressure Plate %1', 'current', '形状'],
  [2, 'Disks (Default) %1', 'changed', '構造', true],
  [3, 'Disk, Bottom %1', 'same'],
  [3, 'Disk, Metal %10', 'changed', '親'],
  [3, 'Disk, Fiber %3', 'gone'],
];

const AFTER = [
  [2, 'Outer Basket %2', 'same'],
  [2, 'Ring, Outer Basket', 'same'],
  [2, 'Rivet, Outer Basket %3', 'same'],
  [2, 'Rivet, Outer Basket %1', 'same'],
  [1, 'Inner Clutch Pack (Default)', 'same', '', true],
  [2, 'Inner Basket', 'changed', 'プロパティ'],
  [2, 'Pressure Plate', 'current', '形状'],
  [2, 'Disks (Default)', 'changed', '構造', true],
  [3, 'Disk, Bottom', 'same'],
  [3, 'Metal', 'added', '', true],
  [4, 'Disk, Metal %4', 'changed', '親'],
];

function PartList({ title, rows }) {
  return (
    <div>
      <ListTitle>{title}</ListTitle>
      <ListFrame>
        <ListPort>
          <Table>
            <colgroup>
              <col width="18" />
              <col width="182" />
              <col width="60" />
              <col />
            </colgroup>
            <thead>
              <tr>
                <HeadCell colSpan={2}>名称</HeadCell>
                <HeadCell>状態</HeadCell>
                <HeadCell>項目</HeadCell>
              </tr>
            </thead>
            <tbody>
              {rows.map(([level, name, kind, note, asm]) => (
                <tr key={name}>
                  <IconCell $wide={asm}>{asm ? <AssemblyIcon /> : <PartIcon />}</IconCell>
                  <NameCell $kind={kind} $level={level}>{name}</NameCell>
                  <Cell $kind={kind}>{STATE_TEXT[kind]}</Cell>
                  <Cell $kind={kind}>{note}</Cell>
                </tr>
              ))}
            </tbody>
          </Table>
        </ListPort>
        <ScrollBar vertical before={12} size={15} after={143} grip={false} />
        <ScrollBar before={1} size={459} after={31} />
      </ListFrame>
    </div>
  );
}

const TABS = [
  ['change', '設計変...'], ['parts', 'パーツ...'], ['assembly', 'アセン...'], ['note', '注記リ...'],
  ['dimension', '寸法リ...'], ['process', '工程リ...'], ['facility', '設備・...'], ['explodeParts', '分解パ...'],
  ['explodeAsm', '分解ア...'], ['noteView', '注釈ビュ...', true], ['animation', 'アニメー...', true], ['clash', '干渉チェ...', true], ['mechanism', '機構シミ...', true],
];

const FILTERS = ['全て', '同一以外', '追加・削除のみ'];

function ComparePanel() {
  const [filter, setFilter] = useState(0);
  const [tab, setTab] = useState('change');

  return (
    <Dock>
      <DockHandle>
        <FlatButton aria-label="閉じる"><Svg w={7} h={7}><path d="M1 1l5 5M6 1L1 6" stroke="#fff" strokeWidth="2" /></Svg></FlatButton>
        <FlatButton aria-label="隠す"><Svg w={5} h={8}><path d="M5 0v8L0 4z" fill="#6b7f99" /></Svg></FlatButton>
        <DockTitle>編集パネル</DockTitle>
      </DockHandle>
      <DockBody>
        <Group>
          <Lists>
            <PartList title="設計変更前" rows={BEFORE} />
            <PartList title="設計変更後" rows={AFTER} />
          </Lists>
          <MatchRow>
            <RowLabel $width={56}>パート一致</RowLabel>
            <PushButton disabled>一致</PushButton>
            <PushButton>解除</PushButton>
          </MatchRow>
          <FilterRow>
            <RowLabel $width={64}>リスト表示</RowLabel>
            {FILTERS.map((text, i) => (
              <Choice key={text}>
                <Radio type="radio" name="filter" checked={filter === i} onChange={() => setFilter(i)} />
                {text}
              </Choice>
            ))}
            <Choice $off><CheckBox type="checkbox" disabled />親も表示</Choice>
            <Commands>
              <PushButton>反映実行...</PushButton>
              <PushButton>キャンセル</PushButton>
            </Commands>
          </FilterRow>
        </Group>
        <DockTabs>
          {TABS.map(([key, text, wide]) => (
            <DockTab key={key} $on={tab === key} $wide={wide} onClick={() => setTab(key)}>
              {TAB_ICONS[key]}
              {text}
            </DockTab>
          ))}
        </DockTabs>
      </DockBody>
    </Dock>
  );
}

export default function App() {
  return (
    <Frame>
      <GlobalStyle />
      <TitleBar>
        <Svg>
          <rect width="16" height="16" fill="#05060c" />
          <circle cx="9" cy="6" r="5.500" fill="#1b62b8" />
          <path d="M5 4q4-3 8 0-4 2-8 0z" fill="#5ab0f0" />
          <path d="M1 10l3 5M4 10l-3 5M6 10l2 5 2-5M12 10v4.500h3" stroke="#f01818" strokeWidth="1.300" />
        </Svg>
        <Title>test.xv2* - XVL Studio Pro - [Selection View - 前]</Title>
        <Caption aria-label="最小化"><Svg w={11} h={5}><rect x=".5" y=".5" width="10" height="4" rx="1" fill="#fff" stroke="#4a5568" /></Svg></Caption>
        <Caption aria-label="元に戻す"><Svg w={11} h={9} shapeRendering="crispEdges"><path d="M.5.5h10v8H.5z" fill="#fff" stroke="#4a5568" /><path d="M3.500 3.500h4v2h-4z" fill="#a8bdd6" stroke="#4a5568" /></Svg></Caption>
        <Caption $close aria-label="閉じる"><Svg w={12} h={10}><path d="M2 1.500l8 7M10 1.500l-8 7" stroke="#5a5060" strokeWidth="4" /><path d="M2 1.500l8 7M10 1.500l-8 7" stroke="#fff" strokeWidth="2.500" /></Svg></Caption>
      </TitleBar>
      <Client>
        <MenuBar>
          <Grip $height={15} />
          <DocIcon>
            <Svg w={14}>
              <path d="M7 1h5l2 3v11H7z" fill="#eef2dc" stroke="#444" />
              <rect width="7" height="16" fill="#000" />
              <path d="M2 2l3 3M5 2L2 5M2 7l3 1.500L2 10M2 12h3v3" stroke="#e8c010" />
            </Svg>
          </DocIcon>
          {MENU.map(([text, key]) => (
            <MenuItem key={key} href={`#${key}`}>{text}(<u>{key}</u>)</MenuItem>
          ))}
          <MdiButtons>
            <FlatButton aria-label="最小化"><Svg w={10} h={10}><path d="M2 8h6" stroke="#000" strokeWidth="2" /></Svg></FlatButton>
            <FlatButton aria-label="元に戻す"><Svg w={10} h={10} shapeRendering="crispEdges"><path d="M3.500 3V1.500h5v4H7M3 1h6M1.500 5h5v4h-5zM1 5h6" stroke="#000" /></Svg></FlatButton>
            <FlatButton aria-label="閉じる"><Svg w={10} h={10}><path d="M1.500 1.500l7 7M8.500 1.500l-7 7" stroke="#000" strokeWidth="1.500" /></Svg></FlatButton>
          </MdiButtons>
        </MenuBar>
        {TOOL_ROWS.map((bars, i) => (
          <ToolRow key={i}>
            {bars.map((items, j) => (
              <Bar key={j}>
                <Grip />
                {items.map((item, k) => <ToolItem key={k} item={item} />)}
              </Bar>
            ))}
          </ToolRow>
        ))}
        <Workspace>
          <SidePane>
            <PaneHeader>
              <PaneTitle>構成ツリー</PaneTitle>
              <FlatButton aria-label="隠す"><Svg w={8} h={6}><path d="M0 6l4-4 4 4z" fill="#777" /></Svg></FlatButton>
              <FlatButton aria-label="閉じる"><Svg w={7} h={7}><path d="M1 1l5 5M6 1L1 6" stroke="#000" strokeWidth="1.500" /></Svg></FlatButton>
            </PaneHeader>
            <TreeFrame>
              <TreeList>
                {TREE.map(([level, name, type, end], i) => (
                  <TreeRow
                    key={name}
                    id={`node${i}`}
                    level={level}
                    name={name}
                    type={type}
                    end={end}
                    selected={name === 'Pressure Plate %1'}
                  />
                ))}
              </TreeList>
              <ScrollBar vertical before={284} size={40} after={105} />
              <ScrollBar before={1} size={259} after={9} />
            </TreeFrame>
            <SideTabs>
              <SideTab><SideTabIcon />構成ツリー</SideTab>
            </SideTabs>
          </SidePane>
          <View><Wheel /></View>
        </Workspace>
        <ComparePanel />
        <StatusBar>
          <StatusText>パート選択中.</StatusText>
          <StatusField>Pressure Plate %1</StatusField>
          <Svg w={14} h={14}><path d="M2 14L14 2M6 14l8-8M10 14l4-4" stroke="#a0a0a0" strokeWidth="1.500" /></Svg>
        </StatusBar>
      </Client>
    </Frame>
  );
}
